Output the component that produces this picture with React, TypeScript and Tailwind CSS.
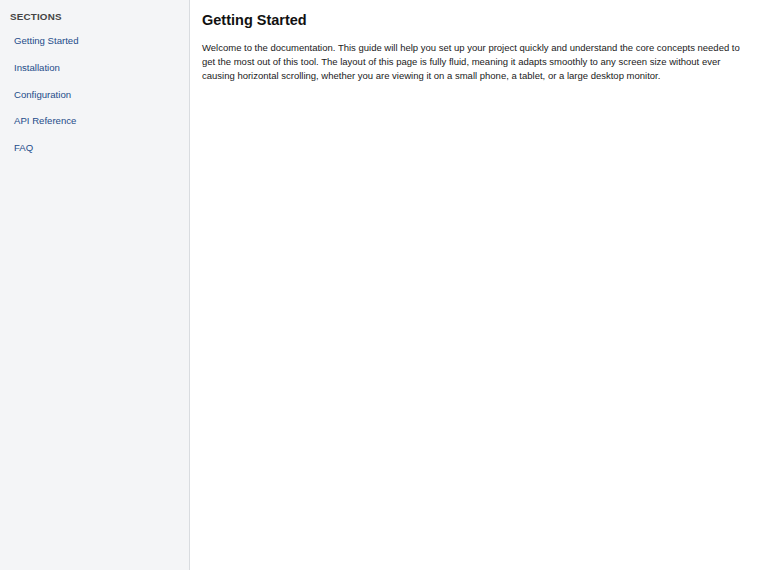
const sections = [
  "Getting Started",
  "Installation",
  "Configuration",
  "API Reference",
  "FAQ",
];

export default function App() {
  return (
    <div className="flex h-[570px] w-full font-['Liberation_Sans',Arial,sans-serif] bg-white">
      <aside className="w-[190px] shrink-0 bg-[#f4f5f7] border-r border-[#d9dce0] px-[10px] pt-[11px]">
        <h3 className="text-[9.8px] leading-[12px] font-bold uppercase tracking-[0.2px] text-[#444] mb-[5px]">
          Sections
        </h3>
        <ul>
          {sections.map((s) => (
            <li key={s}>
              <a
                href="#"
                className="block px-[4px] py-[6px] text-[9.6px] leading-[14.75px] text-[#1d4c8a]"
              >
                {s}
              </a>
            </li>
          ))}
        </ul>
      </aside>
      <main className="flex-1 px-[12px] py-[10px]">
        <h1 className="text-[14.5px] leading-[20px] font-bold text-[#111]">
          Getting Started
        </h1>
        <p className="mt-[11px] text-[9.5px] leading-[14px] text-[#1a1a1a]">
          Welcome to the documentation. This guide will help you set up your
          project quickly and understand the core concepts needed to get the
          most out of this tool. The layout of this page is fully fluid,
          meaning it adapts smoothly to any screen size without ever causing
          horizontal scrolling, whether you are viewing it on a small phone, a
          tablet, or a large desktop monitor.
        </p>
      </main>
    </div>
  );
}
